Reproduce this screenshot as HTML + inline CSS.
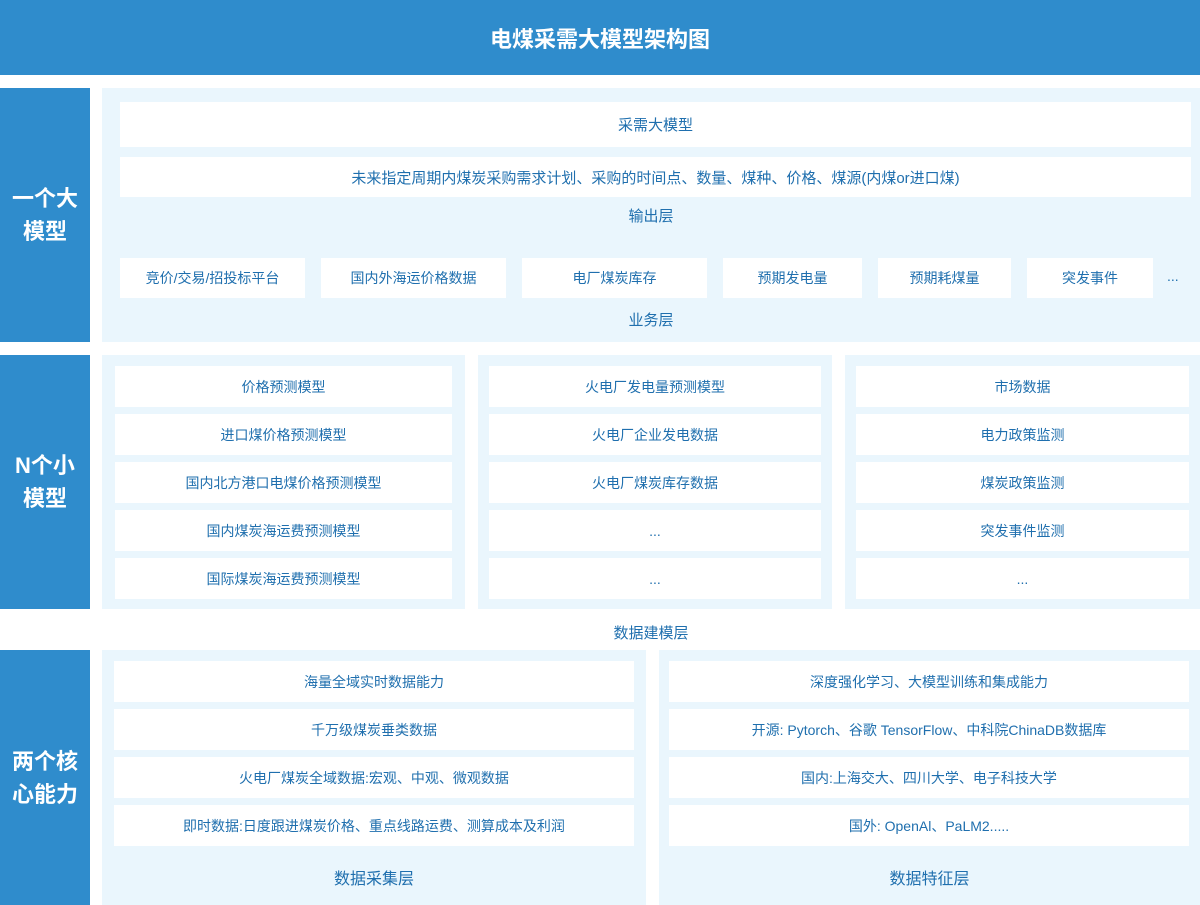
<!DOCTYPE html><html><head><meta charset="utf-8"><style>
*{margin:0;padding:0;box-sizing:border-box}
body{width:1200px;height:905px;background:#fff;font-family:"Liberation Sans","Noto Sans CJK SC",sans-serif;color:#1f6fae;position:relative;overflow:hidden}
.a{position:absolute}
.hd{left:0;top:0;width:1200px;height:75px;background:#2f8ccc;color:#fff;font-size:22px;font-weight:bold;display:flex;align-items:center;justify-content:center}
.lb{left:0;width:90px;background:#2f8ccc;color:#fff;font-size:22px;font-weight:bold;display:flex;align-items:center;justify-content:center;text-align:center;line-height:33px}
.p{background:#eaf6fd}
.b{background:#fff;display:flex;align-items:center;justify-content:center;font-size:14px;white-space:nowrap}
.t{font-size:16px;text-align:center;white-space:nowrap}
</style></head><body>
<div class="a hd">电煤采需大模型架构图</div>
<div class="a lb" style="top:88px;height:254px">一个大<br>模型</div>
<div class="a lb" style="top:355px;height:254px">N个小<br>模型</div>
<div class="a lb" style="top:650px;height:255px">两个核<br>心能力</div>

<div class="a p" style="left:102px;top:88px;width:1098px;height:254px"></div>
<div class="a b" style="left:120px;top:102px;width:1071px;height:45px;font-size:15px">采需大模型</div>
<div class="a b" style="left:120px;top:157px;width:1071px;height:40px;font-size:15px">未来指定周期内煤炭采购需求计划、采购的时间点、数量、煤种、价格、煤源(内煤or进口煤)</div>
<div class="a t" style="left:102px;width:1098px;top:205px;font-size:15px">输出层</div>
<div class="a b" style="left:120px;top:258px;width:185px;height:40px">竞价/交易/招投标平台</div>
<div class="a b" style="left:321px;top:258px;width:185px;height:40px">国内外海运价格数据</div>
<div class="a b" style="left:522px;top:258px;width:185px;height:40px">电厂煤炭库存</div>
<div class="a b" style="left:723px;top:258px;width:139px;height:40px">预期发电量</div>
<div class="a b" style="left:878px;top:258px;width:133px;height:40px">预期耗煤量</div>
<div class="a b" style="left:1027px;top:258px;width:126px;height:40px">突发事件</div>
<div class="a" style="left:1167px;top:268px;font-size:14px">...</div>
<div class="a t" style="left:102px;width:1098px;top:309px;font-size:15px">业务层</div>

<div class="a p" style="left:102px;top:355px;width:363px;height:254px"></div>
<div class="a p" style="left:478px;top:355px;width:354px;height:254px"></div>
<div class="a p" style="left:845px;top:355px;width:355px;height:254px"></div>
<div class="a b" style="left:115px;top:366px;width:337px;height:41px">价格预测模型</div>
<div class="a b" style="left:115px;top:414px;width:337px;height:41px">进口煤价格预测模型</div>
<div class="a b" style="left:115px;top:462px;width:337px;height:41px">国内北方港口电煤价格预测模型</div>
<div class="a b" style="left:115px;top:510px;width:337px;height:41px">国内煤炭海运费预测模型</div>
<div class="a b" style="left:115px;top:558px;width:337px;height:41px">国际煤炭海运费预测模型</div>
<div class="a b" style="left:489px;top:366px;width:332px;height:41px">火电厂发电量预测模型</div>
<div class="a b" style="left:489px;top:414px;width:332px;height:41px">火电厂企业发电数据</div>
<div class="a b" style="left:489px;top:462px;width:332px;height:41px">火电厂煤炭库存数据</div>
<div class="a b" style="left:489px;top:510px;width:332px;height:41px">...</div>
<div class="a b" style="left:489px;top:558px;width:332px;height:41px">...</div>
<div class="a b" style="left:856px;top:366px;width:333px;height:41px">市场数据</div>
<div class="a b" style="left:856px;top:414px;width:333px;height:41px">电力政策监测</div>
<div class="a b" style="left:856px;top:462px;width:333px;height:41px">煤炭政策监测</div>
<div class="a b" style="left:856px;top:510px;width:333px;height:41px">突发事件监测</div>
<div class="a b" style="left:856px;top:558px;width:333px;height:41px">...</div>
<div class="a t" style="left:102px;width:1098px;top:622px;font-size:15px">数据建模层</div>

<div class="a p" style="left:102px;top:650px;width:544px;height:255px"></div>
<div class="a p" style="left:659px;top:650px;width:541px;height:255px"></div>
<div class="a b" style="left:114px;top:661px;width:520px;height:41px">海量全域实时数据能力</div>
<div class="a b" style="left:114px;top:709px;width:520px;height:41px">千万级煤炭垂类数据</div>
<div class="a b" style="left:114px;top:757px;width:520px;height:41px">火电厂煤炭全域数据:宏观、中观、微观数据</div>
<div class="a b" style="left:114px;top:805px;width:520px;height:41px">即时数据:日度跟进煤炭价格、重点线路运费、测算成本及利润</div>
<div class="a t" style="left:102px;width:544px;top:865px">数据采集层</div>
<div class="a b" style="left:669px;top:661px;width:520px;height:41px">深度强化学习、大模型训练和集成能力</div>
<div class="a b" style="left:669px;top:709px;width:520px;height:41px">开源: Pytorch、谷歌 TensorFlow、中科院ChinaDB数据库</div>
<div class="a b" style="left:669px;top:757px;width:520px;height:41px">国内:上海交大、四川大学、电子科技大学</div>
<div class="a b" style="left:669px;top:805px;width:520px;height:41px">国外: OpenAl、PaLM2.....</div>
<div class="a t" style="left:659px;width:541px;top:865px">数据特征层</div>
</body></html>
